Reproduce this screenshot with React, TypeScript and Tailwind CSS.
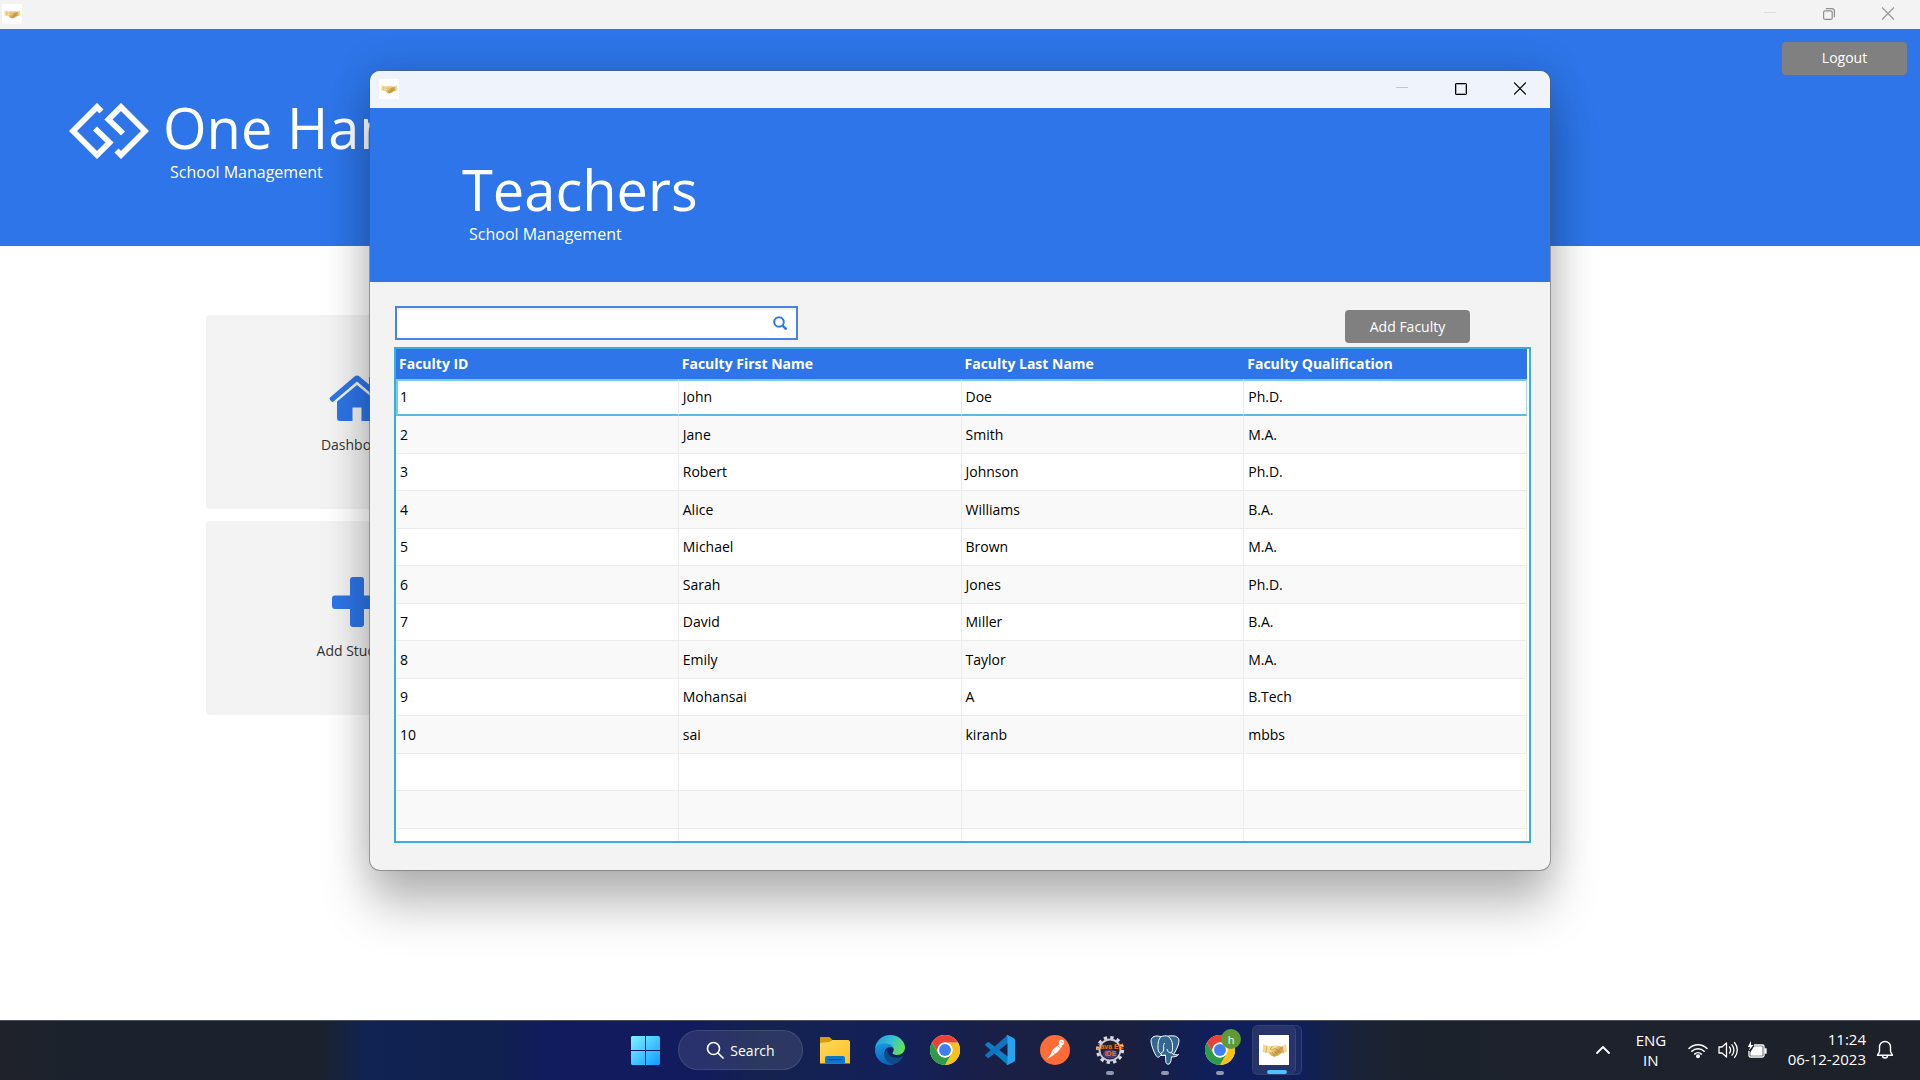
import React from "react";

const faculty = [
  ["1", "John", "Doe", "Ph.D."],
  ["2", "Jane", "Smith", "M.A."],
  ["3", "Robert", "Johnson", "Ph.D."],
  ["4", "Alice", "Williams", "B.A."],
  ["5", "Michael", "Brown", "M.A."],
  ["6", "Sarah", "Jones", "Ph.D."],
  ["7", "David", "Miller", "B.A."],
  ["8", "Emily", "Taylor", "M.A."],
  ["9", "Mohansai", "A", "B.Tech"],
  ["10", "sai", "kiranb", "mbbs"],
  ["", "", "", ""],
  ["", "", "", ""],
  ["", "", "", ""],
];

const columns = ["Faculty ID", "Faculty First Name", "Faculty Last Name", "Faculty Qualification"];

function Handshake({ className }: { className: string }) {
  return (
    <svg viewBox="0 0 30 30" className={className} aria-hidden="true">
      <defs>
        <linearGradient id="gold" x1="0" y1="0" x2="1" y2="0.6">
          <stop offset="0" stopColor="#f3dc94" />
          <stop offset="0.45" stopColor="#f6dd92" />
          <stop offset="0.75" stopColor="#c99a48" />
          <stop offset="1" stopColor="#e9cb80" />
        </linearGradient>
      </defs>
      <rect width="30" height="30" fill="#fff" />
      <path d="M7 11.500 12.500 11l3-.8 4 .6 4 1.200 1.500 5.500-2.500.7-3 2.300-3 1-1.500.3-3-1.300-3-2.500L6.500 17z" fill="url(#gold)" />
      <path d="M4.200 9.200 7.800 10.800 7 17.800l-3.500-.8z" fill="#f1d98f" />
      <path d="M23.300 11.200 27 9.200l1 7.300-3.600 1.700z" fill="#f1d98f" />
      <path d="M7.800 10.800 7 17.800M23.300 11.200l1.100 7" fill="none" stroke="#c79a49" strokeWidth="0.700" />
      <path d="m13.500 11-2.300 3.200 1.800.8 3-1.500 6.500 4.300M10.500 17l2 2.300M12.800 16.500l2.200 3M15.500 16l2.500 3.200M18 15.500l2.500 2.800" fill="none" stroke="#a97d30" strokeWidth="0.600" />
    </svg>
  );
}

function BrandMark() {
  return (
    <svg viewBox="0 0 80 56" className="h-14 w-20" fill="none" stroke="#fff" strokeWidth="5.800" aria-hidden="true">
      <path d="M32.500 8.500 28 4 4 28l24 24 12.500-12.500L26 25.500" />
      <path d="M47.500 47.500 52 52l24-24L52 4 39.500 16.500 54 30.500" />
    </svg>
  );
}

function ChromeLogo() {
  return (
    <svg viewBox="0 0 48 48" className="size-[30px]" aria-hidden="true">
      <circle cx="24" cy="24" r="24" fill="#fff" />
      <path d="M24 12h20.800A24 24 0 0 1 24 48l10.400-18A12 12 0 0 0 24 12z" fill="#fbc116" />
      <path d="M3.200 12a24 24 0 0 1 41.600 0H24a12 12 0 0 0-10.400 18z" fill="#ea4335" />
      <path d="M3.200 12A24 24 0 0 0 24 48l10.400-18a12 12 0 0 1-20.800 0z" fill="#2f9a48" />
      <circle cx="24" cy="24" r="12" fill="#fff" />
      <circle cx="24" cy="24" r="9.500" fill="#3f7ff0" />
    </svg>
  );
}

function WindowsLogo() {
  return (
    <svg viewBox="0 0 29 29" className="size-[29px]" aria-hidden="true">
      <defs>
        <linearGradient id="win" x1="0" y1="0" x2="29" y2="29" gradientUnits="userSpaceOnUse">
          <stop offset="0" stopColor="#7ef2ff" />
          <stop offset="1" stopColor="#0f9bff" />
        </linearGradient>
      </defs>
      <path d="M1 0h13v14H0V1zM15 0h13l1 1v13H15zM0 15h14v14H1l-1-1zM15 15h14v13l-1 1H15z" fill="url(#win)" />
    </svg>
  );
}

function FolderLogo() {
  return (
    <svg viewBox="0 0 30 30" className="size-[30px]" aria-hidden="true">
      <defs>
        <linearGradient id="folder" x1="0" y1="0" x2="1" y2="1">
          <stop offset="0" stopColor="#ffd95e" />
          <stop offset="1" stopColor="#fdbf24" />
        </linearGradient>
      </defs>
      <path d="M0 4.500A1.500 1.500 0 0 1 1.500 2H9.500l3 3h-1L9.500 8H0z" fill="#dd9d0b" />
      <path d="M0 8l9-1 3-2h16.500L30 6.500V28.500H0z" fill="url(#folder)" />
      <path d="M5 28.500V23a2 2 0 0 1 2-2h16a2 2 0 0 1 2 2v5.500z" fill="#0c77cc" />
      <path d="M8.500 24.700h13" stroke="#0a4f93" strokeWidth="1.200" />
    </svg>
  );
}

function EdgeLogo() {
  return (
    <svg viewBox="0 0 30 30" className="size-[30px]" aria-hidden="true">
      <defs>
        <linearGradient id="edgeTop" x1="0" y1="0.300" x2="1" y2="0.600">
          <stop offset="0" stopColor="#1f9fe0" />
          <stop offset="0.500" stopColor="#35c1d5" />
          <stop offset="1" stopColor="#66e64c" />
        </linearGradient>
        <linearGradient id="edgeLeft" x1="0" y1="0" x2="0.300" y2="1">
          <stop offset="0" stopColor="#1a9be2" />
          <stop offset="1" stopColor="#0a62bd" />
        </linearGradient>
      </defs>
      <path d="M0 14A15 15 0 0 1 15 0c9 0 15 6.500 15 12.500 0 4.500-3.500 7.500-8 7.500-3.500 0-5-1.300-4.500-2.300 1.500-1.500 1.500-3.700.5-5.200C15 8 6 7.500 0 14z" fill="url(#edgeTop)" />
      <path d="M0 15C1 10 6 8 10.500 8.500c4 .4 6.800 2.500 7.500 4-4.500-2-9 1.500-8.500 6.500.5 6 5 10 10.500 9.800C18.500 29.600 16.800 30 15 30A15 15 0 0 1 0 15z" fill="url(#edgeLeft)" />
      <path d="M12.200 14.500C9.500 17 9 21 11 24.500c3 4.500 8 5.300 10.500 3.800 3-1.600 5-4 6.200-6.300.3-.6-.2-.8-.7-.5-5 2.600-14.500 1.300-14.800-7z" fill="#114a8b" />
    </svg>
  );
}

function VsCodeLogo() {
  return (
    <svg viewBox="0 0 30 30" className="size-[30px]" aria-hidden="true">
      <path d="M.5 9 2.500 7.300a1.200 1.200 0 0 1 1.500 0L23 21.800v7.900a2 2 0 0 1-1.500-.6L.5 10.600a1.100 1.100 0 0 1 0-1.600z" fill="#0d7fc9" />
      <path d="M.5 21 2.500 22.700a1.200 1.200 0 0 0 1.500 0L23 8.200V.3a2 2 0 0 0-1.500.6L.5 19.400a1.100 1.100 0 0 0 0 1.600z" fill="#0f74bd" />
      <path d="M21.500 29.600A1.600 1.600 0 0 0 22.500 28V2a1.600 1.600 0 0 0-1-1.600c.5-.4 1-.4 1.500-.1l6 2.900c.6.300 1 .9 1 1.600v20.400c0 .7-.4 1.300-1 1.600l-6 2.900c-.5.300-1 .2-1.500-.1z" fill="#27a4f0" />
    </svg>
  );
}

function PostmanLogo() {
  return (
    <svg viewBox="0 0 30 30" className="size-[30px]" aria-hidden="true">
      <circle cx="15" cy="15" r="15" fill="#ff6c37" />
      <circle cx="21.500" cy="7.500" r="2.700" fill="#fff" />
      <path d="M19 9.500 12.500 15l-1.500 4-4.500 5.500 6.500-4 4.500-3.500 5-6z" fill="#fff" />
      <path d="m18 11 3 2.500M12.500 16l2 2.500M21 6.500l1.800 1.300" stroke="#ff6c37" strokeWidth="0.700" />
    </svg>
  );
}

function EclipseLogo() {
  return (
    <svg viewBox="0 0 30 30" className="size-[30px]" aria-hidden="true">
      <circle cx="15" cy="15" r="12.500" fill="none" stroke="#d9dbe2" strokeWidth="3.200" strokeDasharray="3.270 3.270" />
      <circle cx="15" cy="15" r="10.500" fill="#24212c" stroke="#c9ccd6" strokeWidth="1.800" />
      <ellipse cx="15" cy="19" rx="7" ry="4.500" fill="#4b3a78" />
      <text x="15" y="14" textAnchor="middle" fontSize="7" fontWeight="700" fill="#f0780a" className="font-['Liberation_Sans']">Java EE</text>
      <text x="15.500" y="20.500" textAnchor="middle" fontSize="7" fontWeight="700" fill="#f0780a" className="font-['Liberation_Sans']">IDE</text>
    </svg>
  );
}

function PostgresLogo() {
  return (
    <svg viewBox="0 0 30 30" className="size-[30px]" fill="#336791" stroke="#fff" strokeWidth="1" strokeLinejoin="round" aria-hidden="true">
      <path d="M10.500 20.500C9 22.500 7.500 23 6 20.500 3.500 16.500 1 9.500 1 6 1 1.500 5.500 0 11 1.700 13 .8 16 .5 18 1.200 24 0 28.500 1.500 29 5c.3 3.500-2 8.500-4 12l-1.500 2.500c1.500.5 3.500.3 5 0-1 1.800-4 2.700-7 2.300-.3 3-.7 5-1.500 6.500-1.200 1.500-3.500 1-4-.8-.5-2-.3-5.500-.5-7.500z" />
      <path d="M11 1.700C8 4.500 8 9 8 12c-.2 3 .5 5 2.500 6.500 2-.8 3.500-2.500 3.200-5.500-.3-2-.2-3 .8-5M18 1.200c3 2.500 4.500 5.500 4.500 9 0 3 .5 5-1 7.500-2.500.5-4-1-4.500-3.700" fill="none" />
      <path d="M10.500 18.500 12 20.500h4M21.500 17.700l2 1.800" fill="none" />
    </svg>
  );
}

function Minimize({ className }: { className: string }) {
  return (
    <svg viewBox="0 0 12 14" className={className} stroke="currentColor" aria-hidden="true">
      <path d="M0 5.500h12" />
    </svg>
  );
}

function Close({ className }: { className: string }) {
  return (
    <svg viewBox="0 0 12 14" className={className} stroke="currentColor" strokeWidth="1.200" fill="none" aria-hidden="true">
      <path d="m0 .5 12 12M12 .5l-12 12" />
    </svg>
  );
}

function TaskItem({ label, mark, children }: { label: string; mark?: boolean; children: React.ReactNode }) {
  return (
    <button type="button" aria-label={label} className="relative flex h-[50px] w-[55px] items-center justify-center">
      {children}
      {mark && <span className="absolute bottom-0 h-1 w-2 rounded-full bg-[#9196ae]" />}
    </button>
  );
}

function Taskbar() {
  return (
    <footer className="grid h-[60px] grid-cols-[1fr_auto_1fr] items-center border-t border-[#4b505c] bg-[linear-gradient(90deg,#20222b_0px,#1b222d_80px,#1b222d_320px,#102352_365px,#10204f_500px,#111c5f_550px,#121b5d_700px,#14224f_760px,#13205a_900px,#1a1f45_1000px,#191f3d_1130px,#101f5c_1210px,#0f1f5a_1300px,#19223a_1350px,#1c222d_1400px,#1e212a_1920px)] pb-px text-white">
      <span />
      <nav aria-label="Taskbar" className="flex items-center pl-0.5">
        <button type="button" aria-label="Start" className="flex h-[50px] w-[50px] items-center justify-center">
          <WindowsLogo />
        </button>
        <button type="button" className="mr-1 ml-2 flex h-10 w-[125px] items-center justify-center gap-[6px] rounded-full border border-white/10 bg-white/10 text-[14px]">
          <svg viewBox="0 0 18 18" className="size-[18px]" fill="none" stroke="#fff" strokeWidth="1.700" strokeLinecap="round" aria-hidden="true">
            <circle cx="7.500" cy="7.500" r="6" />
            <path d="m12 12 5 5" />
          </svg>
          Search
        </button>
        <div className="flex items-center">
          <TaskItem label="File Explorer"><FolderLogo /></TaskItem>
          <TaskItem label="Edge"><EdgeLogo /></TaskItem>
          <TaskItem label="Chrome"><ChromeLogo /></TaskItem>
          <TaskItem label="Visual Studio Code"><VsCodeLogo /></TaskItem>
          <TaskItem label="Postman"><PostmanLogo /></TaskItem>
          <TaskItem label="Eclipse" mark><EclipseLogo /></TaskItem>
          <TaskItem label="pgAdmin" mark><PostgresLogo /></TaskItem>
          <TaskItem label="Chrome profile" mark>
            <ChromeLogo />
            <span className="absolute top-1 right-1.5 flex size-5 items-center justify-center rounded-full bg-[#5f9a35] text-[11px] leading-none">h</span>
          </TaskItem>
          <div className="flex h-[50px] w-[55px] items-center">
            <button type="button" aria-label="One Hand" className="relative ml-[5px] flex h-[50px] w-[50px] items-center rounded-md border border-white/10 bg-white/5">
              <span className="flex h-full w-[43px] items-center justify-center rounded-md border-r border-white/10 bg-white/5">
                <Handshake className="size-[30px]" />
              </span>
              <span className="absolute bottom-0 left-[14px] h-1 w-5 rounded-full bg-[#4cc2ff]" />
            </button>
          </div>
        </div>
      </nav>
      <div className="flex items-center justify-end pr-[26px] text-[15px] leading-5">
        <svg viewBox="0 0 16 10" className="h-[10px] w-4" fill="none" stroke="#fff" strokeWidth="1.800" strokeLinecap="round" strokeLinejoin="round" aria-hidden="true">
          <path d="m2 8 6-6 6 6" />
        </svg>
        <div className="ml-[25px] w-[30px] pb-px text-center">
          ENG
          <br />
          IN
        </div>
        <svg viewBox="0 0 22 18" className="ml-[21px] h-[18px] w-[22px]" fill="none" stroke="#fff" strokeWidth="1.500" strokeLinecap="round" aria-hidden="true">
          <path d="M2 7.500a12.500 12.500 0 0 1 18 0M4.800 10.300a8.700 8.700 0 0 1 12.400 0M7.700 13.100a4.800 4.800 0 0 1 6.600 0" />
          <circle cx="11" cy="15.300" r="1.300" fill="#fff" />
        </svg>
        <svg viewBox="0 0 22 20" className="ml-2 h-5 w-[22px]" fill="none" stroke="#fff" strokeWidth="1.300" strokeLinecap="round" strokeLinejoin="round" aria-hidden="true">
          <path d="M2 7v6h3l4.500 4V3L5 7zM12.500 7a5 5 0 0 1 0 6M15 4.800a8 8 0 0 1 0 10.400M17.500 2.500a11.500 11.500 0 0 1 0 15" />
        </svg>
        <svg viewBox="0 0 22 18" className="ml-[7px] h-[18px] w-[22px]" fill="none" stroke="#fff" strokeWidth="1.300" aria-hidden="true">
          <path d="M8 4h8.500A1.500 1.500 0 0 1 18 5.500v9a1.500 1.500 0 0 1-1.500 1.500h-12A1.500 1.500 0 0 1 3 14.500V10" />
          <path d="M8.500 6H16v8H5v-2.500zM19 8h1v4h-1z" fill="#fff" />
          <path d="M5 0 1.800 6h2.400L2.500 10 7.500 4H5z" fill="#fff" stroke="none" />
        </svg>
        <div className="ml-5 pb-0.5 text-right">
          11:24
          <br />
          06-12-2023
        </div>
        <svg viewBox="0 0 18 20" className="ml-[10px] h-5 w-[18px]" fill="none" stroke="#fff" strokeWidth="1.400" strokeLinejoin="round" aria-hidden="true">
          <path d="M1.500 15.300h15L14.500 11.500V7a5.500 5.500 0 0 0-11 0v4.500zM6.500 15.500a2.500 2.500 0 0 0 5 0" />
        </svg>
      </div>
    </footer>
  );
}

function TeachersWindow() {
  return (
    <section aria-label="Teachers" className="absolute top-[71px] left-[370px] flex h-[799px] w-[1180px] flex-col overflow-hidden rounded-[10px] bg-[#f3f3f3] shadow-[0_0_0_1px_rgba(90,90,90,0.5),0_0_40px_rgba(0,0,0,0.15),0_36px_48px_rgba(0,0,0,0.26)]">
      <div className="flex h-[37px] shrink-0 items-center bg-[#eff3fb] pr-6 pb-px pl-[9px]">
        <Handshake className="size-5" />
        <div className="ml-auto flex items-center gap-[47px] text-black">
          <button type="button" aria-label="Minimize" className="text-[#c3c5ca]"><Minimize className="h-[14px] w-3" /></button>
          <button type="button" aria-label="Maximize" className="size-3 rounded-[1px] border border-black outline outline-black/30 -outline-offset-2" />
          <button type="button" aria-label="Close"><Close className="h-[14px] w-3" /></button>
        </div>
      </div>
      <div className="h-[174px] shrink-0 bg-[#2d75e8] pt-12 pl-[92px] text-white">
        <h2 className="text-[56px] leading-[66px]">Teachers</h2>
        <p className="pl-[7px] text-[16px] leading-6">School Management</p>
      </div>
      <div className="flex min-h-0 flex-1 flex-col pt-6 pr-[19px] pb-[27px] pl-6">
        <div className="flex items-end justify-between pr-[61px] pl-px">
          <label className="mb-[3px] flex h-[34px] w-[403px] items-center border-2 border-[#4a83e6] bg-white pr-[9px] shadow-[inset_0_2px_2px_rgba(0,0,0,0.06)]">
            <input type="text" aria-label="Search faculty" className="h-full min-w-0 flex-1 bg-transparent px-2 text-[14px] outline-none" />
            <svg viewBox="0 0 14 14" className="size-[14px]" fill="none" stroke="#2d75e8" strokeWidth="2" aria-hidden="true">
              <circle cx="6" cy="6" r="4.800" />
              <path d="m9.500 9.500 4 4" strokeWidth="2.400" />
            </svg>
          </label>
          <button type="button" className="h-[33px] w-[125px] rounded-[4px] bg-[#808080] text-[14px] text-white">Add Faculty</button>
        </div>
        <div className="mt-1 min-h-0 flex-1 overflow-hidden border-2 border-[#39addb] bg-white pr-0.5">
          <table className="w-full table-fixed border-separate border-spacing-0 text-left text-[14px] leading-5 text-black">
            <thead>
              <tr>
                {columns.map((c) => (
                  <th key={c} scope="col" className="h-[30px] bg-[#2d75e8] p-0 pl-[3px] font-bold text-white">{c}</th>
                ))}
              </tr>
            </thead>
            <tbody>
              {faculty.map((row, i) => (
                <tr key={i} className="group h-[37px] even:h-[38px] even:bg-[#f9f9f9]">
                  {row.map((cell, j) => (
                    <td
                      key={j}
                      className="border-r border-b border-[#ececec] p-0 pl-1 group-first:border-t-2 group-first:border-t-[#7accdf] group-first:border-b-2 group-first:border-b-[#5bbcdf] group-first:pb-0.5 group-first:first:border-l-2 group-first:first:border-l-[#7accdf] group-first:first:pl-0.5 group-first:last:border-r-[#a5dcec]"
                    >
                      {cell}
                    </td>
                  ))}
                </tr>
              ))}
            </tbody>
          </table>
        </div>
      </div>
    </section>
  );
}

function MenuCard({ label, children }: { label: string; children: React.ReactNode }) {
  return (
    <button type="button" className="flex h-[194px] flex-col items-center rounded-[4px] bg-[#f3f3f3] pt-14 text-[14px] text-[#333]">
      {children}
      <span className="mt-3 leading-6">{label}</span>
    </button>
  );
}

export default function App() {
  return (
    <div className="relative flex min-h-screen flex-col overflow-hidden bg-white font-['Open_Sans','Noto_Sans',sans-serif]">
      <div className="flex h-[29px] items-center bg-[#f3f3f3] pr-[26px] pb-px pl-[2px] text-[#8f8f8f]">
        <Handshake className="size-5" />
        <div className="ml-auto flex items-center gap-[47px]">
          <button type="button" aria-label="Minimize" className="text-[#dedede]"><Minimize className="h-[14px] w-3" /></button>
          <button type="button" aria-label="Restore">
            <svg viewBox="0 0 12 12" className="size-3" fill="none" stroke="currentColor" strokeWidth="1.200" aria-hidden="true">
              <rect x="0.600" y="2.800" width="8.600" height="8.600" rx="1.500" />
              <path d="M2.800.6h6A2.600 2.600 0 0 1 11.400 3.200v6" />
            </svg>
          </button>
          <button type="button" aria-label="Close"><Close className="h-[14px] w-3" /></button>
        </div>
      </div>
      <header className="flex h-[217px] items-start justify-between bg-[#2d75e8] pr-[13px] pl-[69px] text-white">
        <div className="flex items-start">
          <div className="pt-[74px]"><BrandMark /></div>
          <div className="pt-[65px] pl-[14px]">
            <h1 className="text-[56px] leading-[66px] whitespace-nowrap">One Hand</h1>
            <p className="pl-[7px] text-[16px] leading-6">School Management</p>
          </div>
        </div>
        <button type="button" className="mt-[13px] h-[33px] w-[125px] rounded-[4px] bg-[#808080] pb-0.5 text-[14px]">Logout</button>
      </header>
      <main className="flex-1 pt-[69px] pl-[206px]">
        <div className="grid w-[302px] gap-3">
          <MenuCard label="Dashboard">
            <svg viewBox="0 0 56 50" className="h-[50px] w-14" fill="#2d75e8" aria-hidden="true">
              <path d="M1 26.500 25.500 5.500q2.500-2 5 0L40 13.500V6h7v13.500l8 7q1 1.200 0 2.200l-1.500 1.800q-1 .8-2 0L28 10.500 4.500 30.500q-1 .8-2 0L1 28.700q-1-1.200 0-2.200z" />
              <path d="M8 30.500 28 14l20 16.500V47q0 3-3 3H32.500V36.500h-9V50H11q-3 0-3-3z" />
            </svg>
          </MenuCard>
          <MenuCard label="Add Student">
            <svg viewBox="0 0 50 50" className="h-[50px] w-[50px]" fill="#2d75e8" aria-hidden="true">
              <path d="M21 0h8q3 0 3 3v15.500h15q3 0 3 3v7.500q0 3-3 3H32v15q0 3-3 3h-8q-3 0-3-3V32H3q-3 0-3-3v-7.500q0-3 3-3h15V3q0-3 3-3z" />
            </svg>
          </MenuCard>
        </div>
      </main>
      <Taskbar />
      <TeachersWindow />
    </div>
  );
}
